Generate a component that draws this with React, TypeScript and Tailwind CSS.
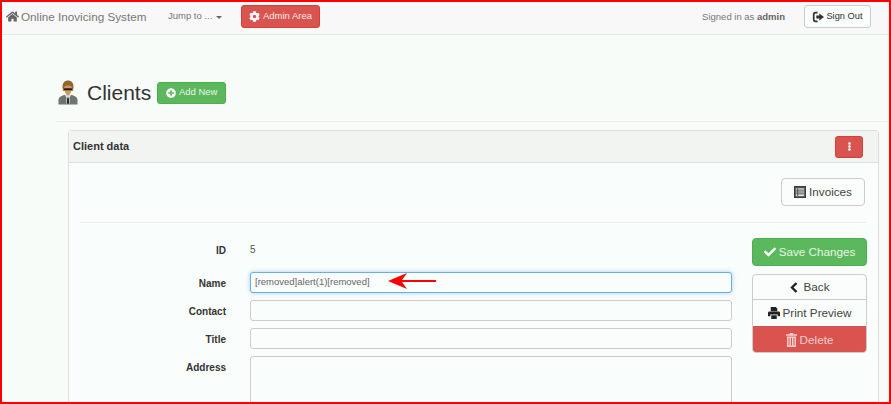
import { FaHome, FaCog, FaPlusCircle, FaCheck, FaEllipsisV } from "react-icons/fa";

function SignOutIcon() {
  return (
    <svg viewBox="0 0 14 14" className="w-[12px] h-[12px]" fill="currentColor">
      <path d="M6.500 1H4a3 3 0 0 0-3 3v6a3 3 0 0 0 3 3h2.500v-2H4.200a1.200 1.200 0 0 1-1.200-1.200V4.200A1.200 1.200 0 0 1 4.200 3h2.300z" />
      <path d="M8.500 3 14 7l-5.500 4V8.800H5V5.200h3.500z" />
    </svg>
  );
}

function ListIcon() {
  return (
    <svg viewBox="0 0 13 13" className="w-[12px] h-[12px]" fill="none">
      <rect x="0.5" y="0.500" width="12" height="12" fill="#555" stroke="#333" />
      <rect x="2" y="2.500" width="9" height="8.500" fill="#ddd" />
      <path d="M2 4.500h9M2 6.500h9M2 8.500h9M4 2.500v8.500" stroke="#444" strokeWidth="0.9" />
    </svg>
  );
}

function BackIcon() {
  return (
    <svg viewBox="0 0 8 11" className="w-[8px] h-[11px]" fill="none">
      <path d="M6.500 1 2 5.500 6.500 10" stroke="currentColor" strokeWidth="2.400" />
    </svg>
  );
}

function PrintIcon() {
  return (
    <svg viewBox="0 0 13 13" className="w-[12px] h-[12px]" fill="currentColor">
      <path d="M3 0h5.500L10 1.500V4.500H3z" />
      <path d="M1.500 5h10A1.500 1.500 0 0 1 13 6.500V10h-2.500V8h-8v2H0V6.500A1.500 1.500 0 0 1 1.500 5z" />
      <path d="M3.500 9h6v4h-6z" />
    </svg>
  );
}

function TrashIcon() {
  return (
    <svg viewBox="0 0 11 14" className="w-[11px] h-[14px]" fill="#f5cfcd">
      <path d="M4 0h3l.500 1.200H11v1.600H0V1.200h3.500z" />
      <path d="M1 3.500h9V14H1zM2.500 5v7.500h1V5zm2.500 0v7.500h1V5zm2.500 0v7.500h1V5z" fillRule="evenodd" />
    </svg>
  );
}

function AgentIcon() {
  return (
    <svg viewBox="0 0 20 25" className="w-[20px] h-[25px]">
      <path d="M0.500 24.500v-4.500c0-2.800 3-4.300 5.800-5h7.400c2.800.7 5.800 2.200 5.800 5v4.500z" fill="#6f7371" />
      <path d="M7 15h6l-1.500 3 .7 5-2.200 1.500L7.800 23l.7-5z" fill="#dfe1df" />
      <path d="M9.300 17.500h1.400l.7 5.500-1.400 1.200L8.600 23z" fill="#2a2a2a" />
      <path d="M4.500 6.500c0-4 2.500-6 5.500-6s5.500 2 5.500 6c0 2-.4 3.500-.9 4.500H5.400c-.5-1-.9-2.500-.9-4.500z" fill="#96642f" />
      <path d="M6.200 7.500c0-1.200 1.400-2 3.800-2s3.800.8 3.800 2c0 3.500-1.700 8-3.800 8s-3.800-4.500-3.800-8z" fill="#cf9a62" />
      <rect x="6" y="8.200" width="8" height="2" rx="0.800" fill="#1d1d1d" />
    </svg>
  );
}

function Field({ label, children }: { label: string; children: React.ReactNode }) {
  return (
    <div className="flex items-center">
      <label className="w-[146px] shrink-0 text-right text-[10px] font-bold text-[#333] pt-[1px]">{label}</label>
      <div className="ml-[24px] flex-1">{children}</div>
    </div>
  );
}

export default function App() {
  return (
    <div className="relative w-[891px] h-[404px] overflow-hidden bg-[#f8fcf9] font-['Liberation_Sans',sans-serif] text-[#333]">
      <nav className="flex items-center h-[35px] bg-[#f8f8f8] border-b border-[#e7e7e7] pl-[6px] pr-[20px]">
        <span className="flex items-center gap-[2px] text-[#777] text-[11.700px] w-[162px]">
          <FaHome className="w-[13px] h-[13px] text-[#666]" />
          Online Inovicing System
        </span>
        <span className="flex items-center text-[#777] text-[9.500px] w-[73px] mb-[1px]">
          Jump to ...
          <span className="ml-[4px] mt-[1px] border-x-[3px] border-x-transparent border-t-[3px] border-t-[#666]" />
        </span>
        <span className="flex items-center justify-center gap-[3px] w-[79px] h-[23px] rounded-[3px] bg-[#d9534f] border border-[#d43f3a] text-[#fbeaea] text-[9.500px] mb-[1px]">
          <FaCog className="w-[11px] h-[11px] text-white" />
          Admin Area
        </span>
        <span className="ml-auto text-[#777] text-[9.500px] mr-[19px]">
          Signed in as <b className="text-[#666]">admin</b>
        </span>
        <span className="flex items-center justify-center gap-[2px] w-[67px] h-[23px] rounded-[3px] bg-[#f9fdfb] border border-[#ccc] text-[#333] text-[9.300px] mb-[1px]">
          <SignOutIcon />
          Sign Out
        </span>
      </nav>

      <div className="pl-[56px]">
        <div className="flex items-center h-[87px] border-b border-[#eeeeee] pl-[2px] pt-[29px]">
          <AgentIcon />
          <h1 className="ml-[9px] text-[21px] leading-[26px] text-[#333]">Clients</h1>
          <span className="ml-[6px] flex items-center justify-center gap-[3px] w-[69px] h-[22px] rounded-[3px] bg-[#5cb85c] border border-[#4cae4c] text-[#e8f5e8] text-[9.500px]">
            <FaPlusCircle className="w-[10px] h-[10px] text-white" />
            Add New
          </span>
        </div>

        <div className="ml-[12px] mr-[12px] mt-[8px] h-[300px] rounded-t-[3px] border border-[#ddd] bg-[#f9fdfb]">
          <div className="flex items-center justify-between h-[32px] bg-[#f2f4f2] border-b border-[#ddd] pl-[4px] pr-[15px]">
            <span className="text-[11px] font-bold text-[#333]">Client data</span>
            <span className="flex items-center justify-center w-[28px] h-[22px] rounded-[3px] bg-[#d9534f] border border-[#d43f3a] text-white">
              <FaEllipsisV className="w-[9px] h-[9px]" />
            </span>
          </div>

          <div className="pl-[11px] pr-[11px]">
            <div className="flex justify-end pt-[15px] pb-[16px] border-b border-[#eeeeee]">
              <span className="mr-[2px] flex items-center justify-center gap-[3px] w-[84px] h-[28px] rounded-[4px] bg-[#f9fdfb] border border-[#ccc] text-[#444] text-[11.700px]">
                <ListIcon />
                Invoices
              </span>
            </div>

            <div className="flex pt-[15px]">
              <div className="w-[652px] flex flex-col">
                <Field label="ID">
                  <span className="block h-[24px] leading-[24px] text-[10px] text-[#555]">5</span>
                </Field>
                <div className="mt-[10px]">
                  <Field label="Name">
                    <div className="h-[21px] rounded-[3px] bg-[#f9fdfb] border border-[#66afe9] shadow-[0_0_4px_rgba(102,175,233,0.6)] px-[4px] leading-[17px] text-[9.500px] text-[#666]">
                      [removed]alert(1)[removed]
                    </div>
                  </Field>
                </div>
                <div className="mt-[7px]">
                  <Field label="Contact">
                    <div className="h-[21px] rounded-[3px] bg-[#f9fdfb] border border-[#ccc]" />
                  </Field>
                </div>
                <div className="mt-[7px]">
                  <Field label="Title">
                    <div className="h-[21px] rounded-[3px] bg-[#f9fdfb] border border-[#ccc]" />
                  </Field>
                </div>
                <div className="mt-[7px] flex items-start">
                  <label className="w-[146px] shrink-0 text-right text-[10px] font-bold text-[#333] pt-[4px]">Address</label>
                  <div className="ml-[24px] flex-1 h-[80px] rounded-[3px] bg-[#f9fdfb] border border-[#ccc]" />
                </div>
              </div>

              <div className="ml-[20px] w-[115px] flex flex-col">
                <span className="flex items-center justify-center gap-[3px] h-[28px] rounded-[4px] bg-[#5cb85c] border border-[#4cae4c] text-[#e8f5e8] text-[11.700px]">
                  <FaCheck className="w-[12px] h-[12px] text-white" />
                  Save Changes
                </span>
                <div className="mt-[8px] flex flex-col rounded-[4px] overflow-hidden border border-[#ccc] text-[11.700px] text-[#444] bg-[#f9fdfb]">
                  <span className="flex items-center justify-center gap-[6px] h-[25px] border-b border-[#ccc]">
                    <span className="text-[#222]"><BackIcon /></span>
                    Back
                  </span>
                  <span className="flex items-center justify-center gap-[3px] h-[26px]">
                    <span className="text-[#222]"><PrintIcon /></span>
                    Print Preview
                  </span>
                  <span className="flex items-center justify-center gap-[3px] h-[27px] bg-[#d9534f] text-[#f5cfcd] -mb-[1px]">
                    <TrashIcon />
                    Delete
                  </span>
                </div>
              </div>
            </div>
          </div>
        </div>
      </div>

      {/* annotation arrow */}
      <svg viewBox="0 0 50 20" className="absolute left-[387px] top-[271px] w-[50px] h-[20px]">
        <path d="M1 10 20 2l-5 7h34v2H15l5 7z" fill="#f00" />
      </svg>
      {/* screenshot frame */}
      <div className="absolute inset-0 border-2 border-[#f00] pointer-events-none" />
    </div>
  );
}
